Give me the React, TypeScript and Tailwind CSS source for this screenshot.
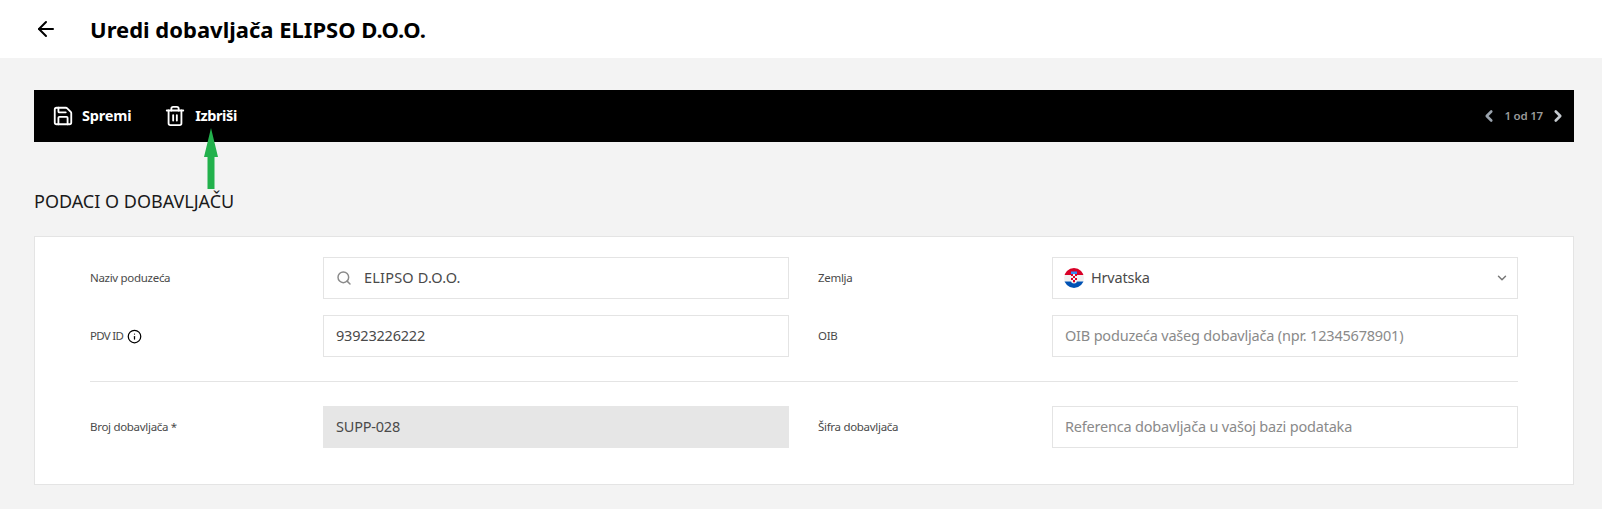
import React from 'react';
import { ArrowLeft, ChevronDown, ChevronLeft, ChevronRight, Info, Save, Search, Trash2 } from 'lucide-react';

function CroatiaFlag() {
  return (
    <svg width="20" height="20" viewBox="0 0 20 20" className="shrink-0">
      <defs>
        <clipPath id="flag-circle">
          <circle cx="10" cy="10" r="10" />
        </clipPath>
      </defs>
      <g clipPath="url(#flag-circle)">
        <rect width="20" height="7" fill="#d80027" />
        <rect y="7" width="20" height="6.5" fill="#f0f0f0" />
        <rect y="13.5" width="20" height="6.5" fill="#0052b4" />
        <rect x="7" y="3.5" width="6" height="2.5" fill="#338af3" />
        <path d="M7 6h6v6.5a3 3 0 0 1-6 0z" fill="#f0f0f0" />
        <path d="M7 6h2v2H7zM11 6h2v2h-2zM9 8h2v2H9zM7 10h2v2H7zM11 10h2v2h-2zM9 12h2v2.2H9z" fill="#d80027" />
      </g>
    </svg>
  );
}

function Field({ children, className = '' }: { children: React.ReactNode; className?: string }) {
  return (
    <div className={`flex h-[42px] items-center border border-[#e4e4e4] px-3 text-[14.5px] tracking-[-0.2px] text-[#4a4a4a] ${className}`}>
      {children}
    </div>
  );
}

function Label({ children }: { children: React.ReactNode }) {
  return <div className="flex items-center gap-[3px] text-[11.5px] tracking-[-0.3px] text-[#4a4a4a]">{children}</div>;
}

export default function App() {
  return (
    <div className="h-[509px] overflow-hidden bg-[#f3f3f3] font-['Noto_Sans',sans-serif]">
      <header className="flex h-[58px] items-center bg-white pl-[34px]">
        <ArrowLeft className="h-[24px] w-[24px] text-black" strokeWidth={2} />
        <h1 className="ml-[32px] text-[22px] font-bold text-black">Uredi dobavljača ELIPSO D.O.O.</h1>
      </header>

      <main className="px-[34px] pr-[28px] pt-[32px]">
        <div className="relative flex h-[52px] items-center justify-between bg-black pl-[18px] pr-[7px]">
          <div className="flex items-center">
            <Save className="h-[22px] w-[22px] text-white" strokeWidth={2} />
            <span className="ml-[8px] text-[14.5px] font-bold tracking-[-0.2px] text-white">Spremi</span>
            <Trash2 className="ml-[33px] h-[22px] w-[22px] text-white" strokeWidth={2} />
            <span className="ml-[9px] text-[14.5px] font-bold tracking-[-0.4px] text-white">Izbriši</span>
          </div>
          <div className="flex items-center text-[#9a9a9a]">
            <ChevronLeft className="h-[18px] w-[18px] text-[#9aa3ad]" strokeWidth={3.5} />
            <span className="mx-[6px] text-[11.5px] font-semibold tracking-[-0.2px]">1 od 17</span>
            <ChevronRight className="h-[18px] w-[18px] text-[#c4c9ce]" strokeWidth={3.5} />
          </div>
          <svg width="16" height="62" viewBox="0 0 16 62" className="absolute left-[169px] top-[38px]">
            <path d="M8 0L15 29H11.5V61H4.5V29H1Z" fill="#22b14c" />
          </svg>
        </div>

        <h2 className="mt-[45px] text-[18px] leading-[28px] text-[#1a1a1a]">PODACI O DOBAVLJAČU</h2>

        <section className="mt-[21px] h-[249px] border border-[#e4e4e4] bg-white px-[55px] pt-[20px]">
          <div className="grid grid-cols-[233px_466px_29px_234px_466px] gap-y-[16px]">
            <Label>Naziv poduzeća</Label>
            <Field>
              <Search className="h-[16px] w-[16px] text-[#8a8a8a]" strokeWidth={2.2} />
              <span className="ml-[12px] tracking-[0.2px]">ELIPSO D.O.O.</span>
            </Field>
            <div />
            <Label>Zemlja</Label>
            <Field className="justify-between">
              <span className="-ml-px flex items-center gap-[7px]">
                <CroatiaFlag />
                Hrvatska
              </span>
              <ChevronDown className="-mr-[4px] h-[14px] w-[14px] text-[#777777]" strokeWidth={2.5} />
            </Field>

            <Label>
              <span className="mr-px tracking-[-0.7px]">PDV ID</span>
              <Info className="h-[15px] w-[15px] text-black" strokeWidth={2} />
            </Label>
            <Field>93923226222</Field>
            <div />
            <Label>OIB</Label>
            <Field className="text-[#8a8a8a]">OIB poduzeća vašeg dobavljača (npr. 12345678901)</Field>
          </div>

          <div className="my-[24px] h-px bg-[#e4e4e4]" />

          <div className="grid grid-cols-[233px_466px_29px_234px_466px]">
            <Label>Broj dobavljača *</Label>
            <Field className="border-[#e6e6e6] bg-[#e6e6e6]">SUPP-028</Field>
            <div />
            <Label>Šifra dobavljača</Label>
            <Field className="text-[#8a8a8a]">Referenca dobavljača u vašoj bazi podataka</Field>
          </div>
        </section>
      </main>
    </div>
  );
}
